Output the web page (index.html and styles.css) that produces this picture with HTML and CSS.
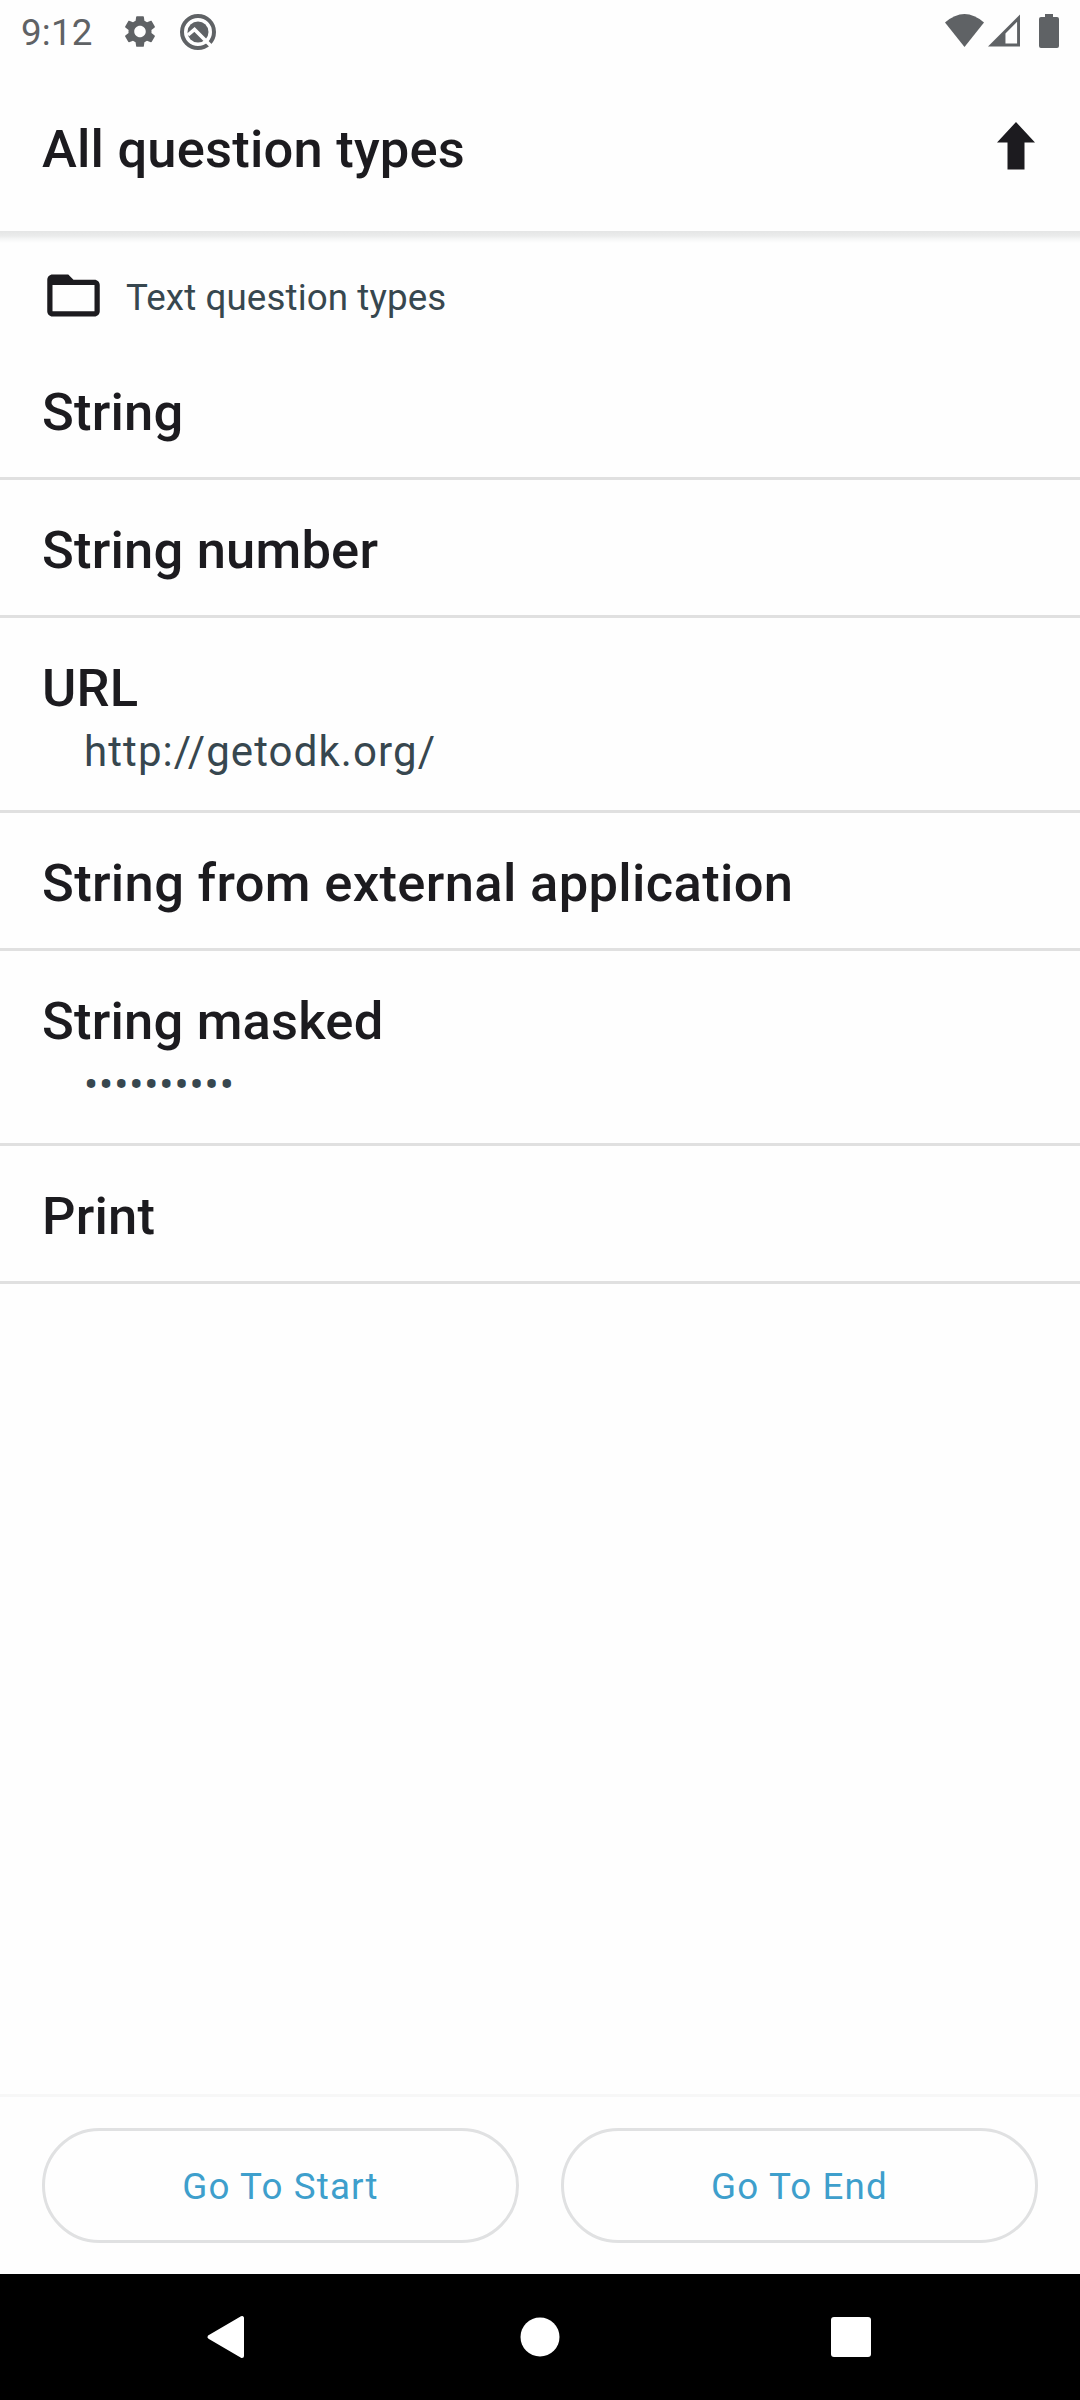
FILE: index.html
```html
<!DOCTYPE html>
<html lang="en">
<head>
<meta charset="utf-8">
<title>All question types</title>
<link rel="stylesheet" href="styles.css">
</head>
<body>
<div class="screen">
  <div class="status-bar">
    <span class="clock">9:12</span>
    <svg class="status-gear" viewBox="2 2 20 20"><path d="M19.14 12.94c.04-.3.06-.61.06-.94 0-.32-.02-.64-.07-.94l2.03-1.58c.18-.14.23-.41.12-.61l-1.92-3.32c-.12-.22-.37-.29-.59-.22l-2.39.96c-.5-.38-1.03-.7-1.62-.94l-.36-2.54c-.04-.24-.24-.41-.48-.41h-3.84c-.24 0-.43.17-.47.41l-.36 2.54c-.59.24-1.13.57-1.62.94l-2.39-.96c-.22-.08-.47 0-.59.22L2.74 8.87c-.12.21-.08.47.12.61l2.03 1.58c-.05.3-.09.63-.09.94s.02.64.07.94l-2.03 1.58c-.18.14-.23.41-.12.61l1.92 3.32c.12.22.37.29.59.22l2.39-.96c.5.38 1.03.7 1.62.94l.36 2.54c.05.24.24.41.48.41h3.84c.24 0 .44-.17.47-.41l.36-2.54c.59-.24 1.13-.56 1.62-.94l2.39.96c.22.08.47 0 .59-.22l1.92-3.32c.12-.22.07-.47-.12-.61l-2.01-1.58zM12 15.6c-1.98 0-3.6-1.62-3.6-3.6s1.62-3.6 3.6-3.6 3.6 1.62 3.6 3.6-1.62 3.6-3.6 3.6z"/></svg>
    <svg class="status-round" viewBox="0 0 36 36">
      <circle cx="18" cy="18" r="16" fill="none" stroke="#5f6265" stroke-width="4"/>
      <circle cx="18" cy="18" r="10.500"/>
      <path d="M8 21L14.500 15.500L31 32" fill="none" stroke="#fefefe" stroke-width="3.600"/>
    </svg>
    <span class="spacer"></span>
    <svg class="status-wifi" viewBox="0 0 39 33"><path d="M0 8.500Q19.500-8.500 39 8.500L19.500 33z"/></svg>
    <svg class="status-signal" viewBox="0 0 33 33"><path fill-rule="evenodd" d="M33 0v33H0zM30 7.500L18 19.500V30h12z"/></svg>
    <svg class="status-battery" viewBox="0 0 20 34"><path d="M6 0h8v3h4q2 0 2 2v27q0 2-2 2H2q-2 0-2-2V5q0-2 2-2h4z"/></svg>
  </div>

  <header class="toolbar">
    <h1 class="toolbar-title">All question types</h1>
    <svg class="up-arrow" viewBox="0 0 38 48"><path d="M19 0L38 20.500H27.500V47.500H10.500V20.500H0z"/></svg>
  </header>

  <main class="content">
    <div class="group">
      <svg class="folder" viewBox="0 0 24 24"><path d="M20 6h-8l-2-2H4c-1.100 0-1.990.9-1.990 2L2 18c0 1.100.9 2 2 2h16c1.100 0 2-.9 2-2V8c0-1.100-.9-2-2-2zm0 12H4V8h16v10z"/></svg>
      <span class="group-name">Text question types</span>
    </div>
    <ul class="questions">
      <li class="question first"><div class="label">String</div></li>
      <li class="question"><div class="label">String number</div></li>
      <li class="question"><div class="label">URL</div><div class="answer">http://getodk.org/</div></li>
      <li class="question"><div class="label long">String from external application</div></li>
      <li class="question"><div class="label">String masked</div><div class="answer masked">••••••••••</div></li>
      <li class="question"><div class="label">Print</div></li>
    </ul>
  </main>

  <footer class="actions">
    <button class="action">Go To Start</button>
    <button class="action">Go To End</button>
  </footer>

  <nav class="nav-bar">
    <svg class="nav-icon" viewBox="0 0 42 42"><path d="M1.500 21L34 2V40z" stroke="#fff" stroke-width="4" stroke-linejoin="round"/></svg>
    <svg class="nav-icon" viewBox="0 0 42 42"><circle cx="21" cy="21" r="19.500"/></svg>
    <svg class="nav-icon" viewBox="0 0 42 42"><rect x="1" y="1" width="40" height="40" rx="3"/></svg>
  </nav>
</div>
</body>
</html>
```
FILE: styles.css
```css
* { box-sizing: border-box; }

body {
  margin: 0;
  background: #fefefe;
  font-family: Roboto, sans-serif;
  color: #1c1b1f;
}

svg { display: block; flex: none; overflow: visible; }

.screen {
  width: 1080px;
  height: 2400px;
  display: flex;
  flex-direction: column;
  background: #fefefe;
}

.status-bar {
  height: 63px;
  display: flex;
  align-items: flex-start;
  padding: 14px 21px 0;
  fill: #5f6265;
  color: #5f6265;
}
.clock {
  width: 103px;
  font-size: 36.75px;
  line-height: 38px;
  letter-spacing: 0.2px;
}
.status-gear { width: 32px; height: 33px; margin-top: 1px; }
.status-round { width: 36px; height: 36px; margin-left: 24px; }
.spacer { flex: 1; }
.status-wifi { width: 39px; height: 33px; margin-right: 4px; }
.status-signal { width: 32px; height: 33px; margin-right: 19px; }
.status-battery { width: 20px; height: 34px; }

.toolbar {
  height: 168px;
  display: flex;
  align-items: flex-start;
  justify-content: space-between;
  padding: 55px 45px 0 42px;
}
.toolbar-title {
  margin: 0;
  font-size: 52.5px;
  line-height: 62px;
  font-weight: 500;
  letter-spacing: 0.2px;
}
.up-arrow { width: 38px; height: 48px; margin-top: 4px; fill: #1c1b1f; }

.content {
  flex: 1;
  background: linear-gradient(#e4e5e5, #ebecec 5px, #f5f6f6 8px, #fefefe 12px) top / 100% 12px no-repeat;
}
.group {
  height: 135px;
  display: flex;
  align-items: flex-start;
  gap: 21px;
  padding: 33px 42px 0;
}
.folder { width: 63px; height: 63px; fill: #1c1b1f; }
.group-name {
  margin-top: 13px;
  font-size: 36.75px;
  line-height: 42px;
  letter-spacing: 0.1px;
  color: #37474f;
}

.questions { margin: 0; padding: 0; list-style: none; }
.question {
  padding: 39px 42px 34px;
  border-bottom: 3px solid #e0e0e0;
}
.question.first { padding-top: 15px; }
.label {
  font-size: 52.5px;
  line-height: 62px;
  font-weight: 500;
  letter-spacing: 0.2px;
}
.label.long { letter-spacing: 0.34px; }
.answer {
  height: 57px;
  padding: 6px 0 0 42px;
  font-size: 42px;
  line-height: 53px;
  letter-spacing: 1.1px;
  color: #37474f;
}
.answer.masked { letter-spacing: 0.9px; }

.actions {
  height: 180px;
  display: flex;
  gap: 42px;
  padding: 31px 42px 0;
  border-top: 3px solid #f7f7f7;
}
.action {
  flex: 1;
  height: 115px;
  padding: 3px 0 0;
  border: 3px solid #e0e1e2;
  border-radius: 58px;
  background: transparent;
  font: 400 36.75px/42px Roboto, sans-serif;
  letter-spacing: 1.15px;
  color: #3e9fcc;
}

.nav-bar {
  height: 126px;
  display: flex;
  align-items: center;
  justify-content: center;
  gap: 269px;
  background: #000;
  fill: #fff;
}
.nav-icon { width: 42px; height: 42px; }
```
